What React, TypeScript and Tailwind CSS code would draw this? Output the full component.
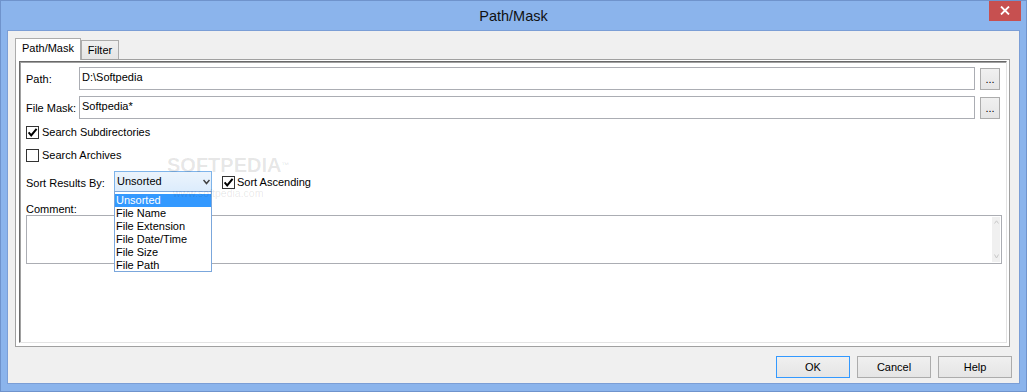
import React from "react";

function Check({ checked }: { checked: boolean }) {
  return (
    <span className="w-[13px] h-[13px] border border-[#333333] bg-white flex items-center justify-center shrink-0">
      {checked && (
        <svg width="11" height="11" viewBox="0 0 11 11">
          <path d="M1.6 5.4 L4.2 8.4 L9.6 1.8" fill="none" stroke="#000" strokeWidth="2" />
        </svg>
      )}
    </span>
  );
}

function Btn({ label, focused }: { label: string; focused?: boolean }) {
  return (
    <div
      className={
        "w-[74px] h-[22px] border bg-linear-to-b from-[#f0f0f0] to-[#e5e5e5] flex items-center justify-center leading-[13px] " +
        (focused ? "border-[#3399ff]" : "border-[#acacac]")
      }
    >
      {label}
    </div>
  );
}

function Dots() {
  return (
    <div className="w-[20px] h-[22px] self-end border border-[#acacac] bg-linear-to-b from-[#f0f0f0] to-[#e5e5e5] flex items-center justify-center leading-[13px] shrink-0">
      ...
    </div>
  );
}

export default function App() {
  const items = ["Unsorted", "File Name", "File Extension", "File Date/Time", "File Size", "File Path"];
  return (
    <div className="w-[1027px] h-[392px] bg-[#8bb4ec] border border-[#6f93cc] flex flex-col font-['Liberation_Sans',Arial,sans-serif] text-[11px] text-black relative overflow-hidden">
      {/* Title bar */}
      <div className="h-[29px] shrink-0 flex items-center justify-center relative">
        <span className="text-[14.5px] leading-[17px] text-[#111] pt-[1px]">Path/Mask</span>
        <div className="absolute right-[5px] top-[-1px] w-[32px] h-[21px] bg-[#c75050] flex items-center justify-center">
          <svg width="10" height="9" viewBox="0 0 10 9">
            <path d="M1 0.5 L9 8.5 M9 0.5 L1 8.5" stroke="#fff" strokeWidth="1.8" fill="none" />
          </svg>
        </div>
      </div>

      {/* Client area */}
      <div className="mx-[6px] mb-[7px] flex-1 bg-[#f0f0f0] border border-[#7b9ed6] flex flex-col px-[7px] pt-[7px] pb-[5px]">
        {/* Tabs */}
        <div className="flex h-[21px] items-end relative z-10 shrink-0">
          <div className="w-[66px] h-[22px] -mb-px bg-white border border-b-0 border-[#acacac] flex justify-center pt-[3px] leading-[13px]">
            Path/Mask
          </div>
          <div className="w-[38px] h-[19px] border border-b-0 border-[#acacac] bg-linear-to-b from-[#f0f0f0] to-[#e5e5e5] flex justify-center pt-[3px] leading-[13px]">
            Filter
          </div>
        </div>

        {/* Panel */}
        <div className="h-[288px] mr-[2px] border border-[#a0a0a0] bg-white pt-px pl-[3px] pr-[2px] pb-[3px] flex shrink-0">
          <div className="flex-1 border border-l-[#696969] border-t-[#696969] border-r-[#e3e3e3] border-b-[#e3e3e3] shadow-[inset_1px_1px_0_#a0a0a0] relative flex flex-col pl-[6px] pr-[4px] pt-[5px]">
            {/* Path */}
            <div className="flex h-[23px] pr-[2px]">
              <div className="w-[53px] shrink-0 pt-[6px] leading-[13px]">Path:</div>
              <div className="flex-1 h-[23px] border border-[#abadb3] pl-[2px] pt-[3px] leading-[13px]">D:\Softpedia</div>
              <div className="w-[5px] shrink-0" />
              <Dots />
            </div>
            {/* File Mask */}
            <div className="flex h-[23px] pr-[2px] mt-[6px]">
              <div className="w-[53px] shrink-0 pt-[6px] leading-[13px]">File Mask:</div>
              <div className="flex-1 h-[23px] border border-[#abadb3] pl-[2px] pt-[3px] leading-[13px]">Softpedia*</div>
              <div className="w-[5px] shrink-0" />
              <Dots />
            </div>
            {/* Checkboxes */}
            <div className="flex items-center gap-[3px] h-[13px] mt-[7px] leading-[13px]">
              <Check checked />
              <span>Search Subdirectories</span>
            </div>
            <div className="flex items-center gap-[3px] h-[13px] mt-[10px] leading-[13px]">
              <Check checked={false} />
              <span>Search Archives</span>
            </div>
            {/* Sort row */}
            <div className="flex items-center h-[21px] mt-[9px] leading-[13px]">
              <div className="w-[88px] shrink-0 pt-[3px]">Sort Results By:</div>
              <div className="relative w-[98px] h-[21px] shrink-0">
                <div className="w-full h-full border border-[#7eb4ea] bg-linear-to-b from-[#ecf4fc] to-[#dcecfc] flex items-center justify-between pl-[2px] pr-[1px]">
                  <span>Unsorted</span>
                  <svg width="7" height="6" viewBox="0 0 7 6">
                    <path d="M0.5 1 L3.5 4.5 L6.5 1" stroke="#404040" strokeWidth="1.5" fill="none" />
                  </svg>
                </div>
                <div className="absolute left-0 top-[20px] w-[98px] h-[81px] bg-white border border-[#7ba7dc] pt-[2px] z-20">
                  {items.map((it, i) => (
                    <div
                      key={it}
                      className={
                        "h-[13px] leading-[13px] pl-[1px] " + (i === 0 ? "bg-[#3399ff] text-white" : "")
                      }
                    >
                      {it}
                    </div>
                  ))}
                </div>
              </div>
              <div className="ml-[10px] flex items-center gap-[2px] pt-[1px] leading-[12px]">
                <Check checked />
                <span>Sort Ascending</span>
              </div>
            </div>
            {/* Comment */}
            <div className="mt-[11px] h-[12px] leading-[12px]">Comment:</div>
            <div className="h-[49px] border border-[#abadb3] flex justify-end">
              <div className="w-[8px] mt-px mb-px mr-px bg-[#f0f0f0] flex flex-col justify-between items-center py-[3px]">
                <svg width="5" height="4" viewBox="0 0 5 4">
                  <path d="M0.5 3.5 L2.5 0.8 L4.5 3.5" stroke="#c8c8c8" strokeWidth="1" fill="none" />
                </svg>
                <svg width="5" height="5" viewBox="0 0 5 5">
                  <path d="M0.5 0.5 L2.5 4 L4.5 0.5" stroke="#c8c8c8" strokeWidth="1" fill="none" />
                </svg>
              </div>
            </div>

            {/* Watermark */}
            <div className="absolute left-[147px] top-[96px] text-[20px] leading-[15px] font-bold text-black/10 pointer-events-none z-30 whitespace-nowrap">
              SOFTPEDIA<span className="text-[8px] align-top">™</span>
            </div>
            <div className="absolute left-[153px] top-[127px] text-[10.5px] leading-[9px] text-black/10 pointer-events-none z-30 whitespace-nowrap">
              www.softpedia.com
            </div>
          </div>
        </div>

        {/* Buttons */}
        <div className="mt-[9px] flex justify-end gap-[7px] h-[22px] shrink-0">
          <Btn label="OK" focused />
          <Btn label="Cancel" />
          <Btn label="Help" />
        </div>
      </div>
    </div>
  );
}
